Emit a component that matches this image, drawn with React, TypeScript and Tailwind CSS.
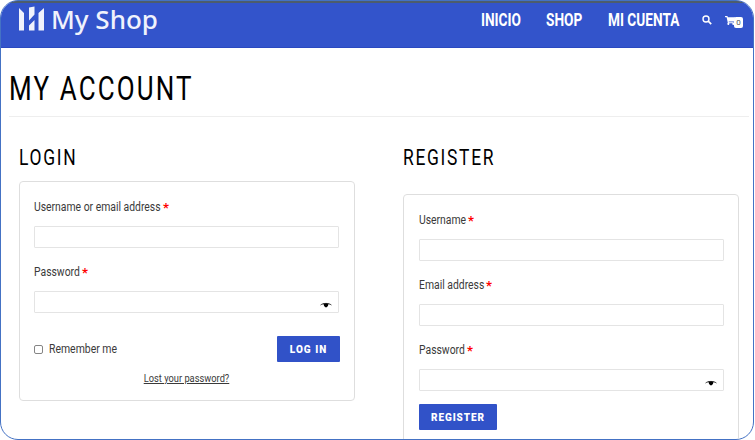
import type { ReactNode } from 'react';

function EyeIcon() {
  return (
    <svg className="mt-[9px] mr-[6px] h-[8px] w-[12px]" viewBox="0 0 12 8" fill="none">
      <path d="M.6 4C3.4 1.9 8.5 1.9 11.4 4" stroke="#333" strokeWidth="1" />
      <path d="M3.4 2.6h5.2L8 4.8 6.8 6.2H5.2L4 4.8Z" fill="#000" />
    </svg>
  );
}

function Field({ label, labelWidth, eye }: { label: string; labelWidth: string; eye?: boolean }) {
  return (
    <label className="block h-[65px]">
      <span className="flex h-[12px] items-center text-[12px] leading-[12px] text-[#3a3a3a]">
        <span className={`${labelWidth} -mt-[2px] whitespace-nowrap`}>
          <span className="inline-block origin-left scale-x-[.865]">{label}</span>
        </span>
        <b className="text-[13px] text-[#f00]">*</b>
      </span>
      <span className="mt-[12px] flex h-[22px] justify-end rounded-[1px] border border-[#e4e4e4] bg-white">
        {eye && <EyeIcon />}
      </span>
    </label>
  );
}

function Title({ children }: { children: ReactNode }) {
  return (
    <h2 className="h-[22px] origin-left scale-x-[.81] text-[21.5px] leading-[22px] tracking-[2.1px] whitespace-nowrap text-black">
      {children}
    </h2>
  );
}

export default function App() {
  return (
    <div className="h-[440px] w-[755px] overflow-hidden bg-white font-['Roboto','Liberation_Sans',sans-serif]">
      <div className="h-[440px] w-[754px] overflow-hidden rounded-[18px] border border-[#4472c4] bg-white">
        <header className="flex h-[47px] items-start border-t-2 border-b border-t-[#4d5d6c] border-b-[#2a49c0] bg-[#3354cb]">
          <svg className="mt-[3px] ml-[17px] h-[25px] w-[27px] shrink-0" viewBox="0 0 27 25" fill="#f0f2fc">
            <path d="M1 2 6 7V24.5H1ZM11 1.5 16.5 .5V8.5L11 14.5ZM11 19.5 16.5 14V24.5H11ZM20.5 7 26 2V24.5H20.5Z" />
          </svg>
          <div className="w-[108px] pl-[6px] text-[26px] leading-[32px] font-medium whitespace-nowrap text-[#f0f2fc] font-['Noto_Sans','Open_Sans',sans-serif]">
            My Shop
          </div>
          <nav className="mt-[7px] ml-[328px] flex text-[17.5px] leading-[20px] font-bold whitespace-nowrap text-white">
            <a className="w-[65px]"><span className="inline-block origin-left scale-x-[.78]">INICIO</span></a>
            <a className="w-[62px]"><span className="inline-block origin-left scale-x-[.78]">SHOP</span></a>
            <a className="w-[94px]"><span className="inline-block origin-left scale-x-[.78]">MI CUENTA</span></a>
          </nav>
          <svg className="mt-[12px] h-[10px] w-[10px] shrink-0" viewBox="0 0 10 10" fill="none" stroke="white" strokeWidth="1.4">
            <circle cx="4" cy="4" r="3" /><path d="m6.2 6.2 3 3" strokeWidth="1.7" />
          </svg>
          <svg className="mt-[13px] ml-[13px] h-[9px] w-[10px] shrink-0" viewBox="0 0 576 512" fill="white">
            <path d="M528 301 576 94c3-15-8-30-24-30H159l-9-45C148 8 138 0 126 0H24C11 0 0 11 0 24v16c0 13 11 24 24 24h70l70 343a56 56 0 1 0 67 9h210a56 56 0 1 0 63-11l6-24c3-15-8-30-24-30H218l-6-32h293c11 0 21-8 23-18Z" />
          </svg>
          <span className="-ml-px mt-[14px] flex h-[11px] w-[9px] items-center justify-center rounded-[2px] bg-white text-[8px] leading-none text-[#555]">0</span>
        </header>
        <main className="pl-[8px]">
          <div className="mr-[4px] h-[69px] border-b border-[#eee] pt-[23px]">
            <h1 className="origin-left scale-x-[.787] text-[33px] leading-[36px] tracking-[2.7px] whitespace-nowrap text-black">MY ACCOUNT</h1>
          </div>
          <div className="flex gap-[49px] pt-[30px] pl-[10px]">
            <section className="w-[336px]">
              <Title>LOGIN</Title>
              <form className="mt-[12px] h-[220px] rounded-[4px] border border-[#dedede] pt-[20px] pr-[15px] pl-[14px]">
                <Field label="Username or email address" labelWidth="w-[129px]" />
                <Field label="Password" labelWidth="w-[48px]" eye />
                <div className="mt-[4px] flex h-[26px] items-center">
                  <i className="mt-[1px] h-[9px] w-[9px] rounded-[2px] border border-[#858585]" />
                  <span className="ml-[6px] origin-left scale-x-[.87] text-[12px] text-[#3a3a3a]">Remember me</span>
                  <button type="button" className="-mr-px ml-auto h-[26px] w-[63px] rounded-[1px] bg-[#3152c8] text-[10px] font-black tracking-[1px] text-white">LOG IN</button>
                </div>
                <a className="mt-[10px] block scale-x-[.93] text-center text-[10px] leading-[14px] text-[#3a3a3a] underline">Lost your password?</a>
              </form>
            </section>
            <section className="-ml-px w-[336px]">
              <Title>REGISTER</Title>
              <form className="mt-[25px] h-[260px] rounded-[4px] border border-[#dedede] pt-[20px] pr-[14px] pl-[15px]">
                <Field label="Username" labelWidth="w-[49px]" />
                <Field label="Email address" labelWidth="w-[67px]" />
                <Field label="Password" labelWidth="w-[48px]" eye />
                <button type="button" className="-mt-[6px] block h-[26px] w-[78px] rounded-[1px] bg-[#3152c8] text-[10px] font-black tracking-[.9px] text-white">REGISTER</button>
              </form>
            </section>
          </div>
        </main>
      </div>
    </div>
  );
}
